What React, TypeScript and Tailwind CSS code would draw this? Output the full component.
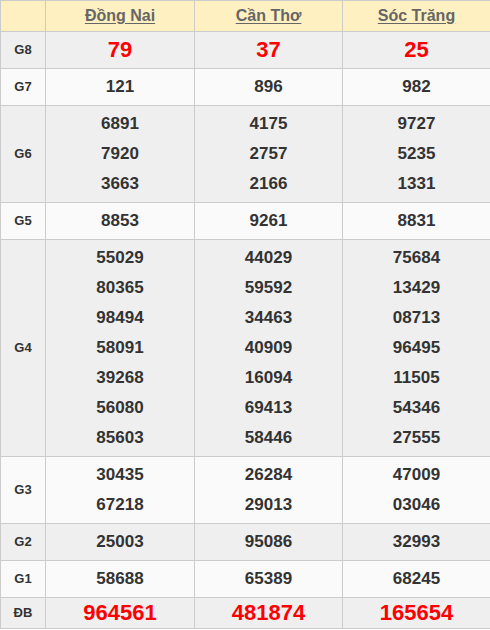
import React from "react";

type Row = { label: string; cols: string[][]; big?: boolean; last?: boolean };

const rows: Row[] = [
  { label: "G8", cols: [["79"], ["37"], ["25"]], big: true },
  { label: "G7", cols: [["121"], ["896"], ["982"]] },
  { label: "G6", cols: [["6891", "7920", "3663"], ["4175", "2757", "2166"], ["9727", "5235", "1331"]] },
  { label: "G5", cols: [["8853"], ["9261"], ["8831"]] },
  {
    label: "G4",
    cols: [
      ["55029", "80365", "98494", "58091", "39268", "56080", "85603"],
      ["44029", "59592", "34463", "40909", "16094", "69413", "58446"],
      ["75684", "13429", "08713", "96495", "11505", "54346", "27555"],
    ],
  },
  { label: "G3", cols: [["30435", "67218"], ["26284", "29013"], ["47009", "03046"]] },
  { label: "G2", cols: [["25003"], ["95086"], ["32993"]] },
  { label: "G1", cols: [["58688"], ["65389"], ["68245"]] },
  { label: "ĐB", cols: [["964561"], ["481874"], ["165654"]], big: true, last: true },
];

export default function App() {
  return (
    <div className="w-[490px] h-[630px] overflow-hidden bg-white" style={{ fontFamily: '"Liberation Sans", Arial, sans-serif' }}>
      <table className="w-[490px] border-collapse table-fixed">
        <colgroup>
          <col className="w-[45px]" />
          <col className="w-[149px]" />
          <col className="w-[148px]" />
          <col className="w-[148px]" />
        </colgroup>
        <thead>
          <tr className="bg-[#fff0c1]">
            <th className="border border-[#cccccc] h-[31px] p-0"></th>
            {["Đồng Nai", "Cần Thơ", "Sóc Trăng"].map((n) => (
              <th key={n} className="border border-[#cccccc] p-0 leading-[30px] text-[16px] font-bold text-[#666666] text-center">
                <span className="underline underline-offset-[2px]">{n}</span>
              </th>
            ))}
          </tr>
        </thead>
        <tbody>
          {rows.map((r, i) => (
            <tr key={r.label} className={i % 2 === 0 ? "bg-[#efefef]" : "bg-[#fafafa]"}>
              <td className={`border border-[#cccccc] ${r.last ? "py-0" : "py-[3px]"} px-0 text-[13px] font-bold text-[#333333] text-center`}>
                {r.label}
              </td>
              {r.cols.map((c, j) => (
                <td key={j} className={`border border-[#cccccc] ${r.last ? "py-0" : "py-[3px]"} px-0 text-center font-bold`}>
                  {c.map((v, k) => (
                    <div
                      key={k}
                      className={
                        r.big
                          ? "leading-[30px] text-[22px] text-[#ff0000]"
                          : "leading-[30px] text-[17px] text-[#333333]"
                      }
                    >
                      {v}
                    </div>
                  ))}
                </td>
              ))}
            </tr>
          ))}
        </tbody>
      </table>
    </div>
  );
}
